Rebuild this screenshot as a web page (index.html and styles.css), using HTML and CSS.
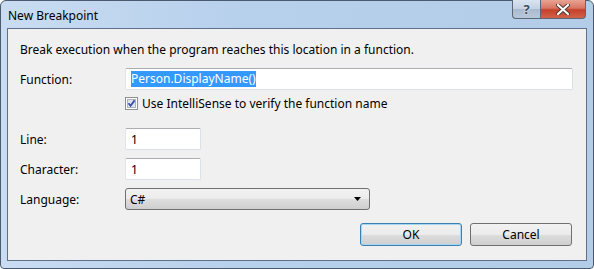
FILE: index.html
```html
<!DOCTYPE html>
<html lang="en">
<head>
    <meta charset="UTF-8">
    <title>New Breakpoint</title>
    <link rel="stylesheet" href="styles.css">
</head>
<body>
    <div class="window">
        <div class="titlebar">
            <span class="title">New Breakpoint</span>
            <div class="caption-buttons">
                <div class="cap help">?</div>
                <div class="cap close">
                    <svg width="14" height="11" viewBox="0 0 14 11">
                        <path d="M2 1 L12 10 M12 1 L2 10" stroke="#4a3530" stroke-width="4" stroke-linecap="round"/>
                        <path d="M2 1 L12 10 M12 1 L2 10" stroke="#fff" stroke-width="2.2" stroke-linecap="round"/>
                    </svg>
                </div>
            </div>
        </div>
        <div class="client">
            <div class="intro">Break execution when the program reaches this location in a function.</div>

            <div class="row row-function">
                <label class="label">Function:</label>
                <div class="textbox wide"><span class="selected">Person.DisplayName()</span></div>
            </div>

            <div class="row row-check">
                <span class="label"></span>
                <div class="check">
                    <svg class="checkbox" width="13" height="13" viewBox="0 0 13 13">
                        <rect x="0.5" y="0.5" width="12" height="12" fill="#fff" stroke="#8e8f8f"/>
                        <rect x="2.5" y="2.5" width="8" height="8" fill="#dfe5ef" stroke="#aeb3b9"/>
                        <path d="M3.5 6.2 L5.6 8.8 L9.6 3.4" fill="none" stroke="#3c4fa8" stroke-width="1.8"/>
                    </svg>
                    <span>Use IntelliSense to verify the function name</span>
                </div>
            </div>

            <div class="row row-line">
                <label class="label">Line:</label>
                <div class="textbox small">1</div>
            </div>

            <div class="row row-char">
                <label class="label">Character:</label>
                <div class="textbox small">1</div>
            </div>

            <div class="row row-lang">
                <label class="label">Language:</label>
                <div class="combo">
                    <span>C#</span>
                    <svg width="8" height="5" viewBox="0 0 8 5"><path d="M0 0 H7 L3.5 4 Z" fill="#000"/></svg>
                </div>
            </div>

            <div class="buttons">
                <div class="btn default">OK</div>
                <div class="btn">Cancel</div>
            </div>
        </div>
    </div>
</body>
</html>
```

FILE: styles.css
```css
body {
    margin: 0;
    padding: 0;
    font-family: "Noto Sans", "Open Sans", sans-serif;
    font-size: 12px;
    color: #000;
    background-color: #fff;
}

.window {
    width: 594px;
    height: 269px;
    box-sizing: border-box;
    border: 1px solid #4b5a6e;
    border-radius: 6px 6px 4px 4px;
    background: linear-gradient(to right, #c9dcf2 0%, #b7d0ec 40%, #b3cde9 100%);
    padding: 0 6px 7px 6px;
    display: flex;
    flex-direction: column;
}

.titlebar {
    height: 27px;
    display: flex;
    justify-content: space-between;
    align-items: flex-start;
}

.title {
    margin-top: 6px;
    margin-left: 1px;
    font-size: 12px;
    color: #000;
}

.caption-buttons {
    display: flex;
    margin-top: -1px;
    margin-right: 1px;
}

.cap {
    height: 19px;
    box-sizing: border-box;
    border: 1px solid #5c6776;
    border-top: none;
    display: flex;
    align-items: center;
    justify-content: center;
}

.help {
    width: 28px;
    border-right: none;
    border-radius: 0 0 0 4px;
    background: linear-gradient(to bottom, #d9e4f1 0%, #c3d1e2 50%, #a9bad0 51%, #b8c8dc 100%);
    color: #3e4a5c;
    font-weight: bold;
    font-size: 13px;
    text-shadow: 0 0 2px #fff;
}

.close {
    width: 46px;
    border-radius: 0 0 4px 0;
    background: linear-gradient(to bottom, #e8a493 0%, #d87562 45%, #c4412a 55%, #d3624a 100%);
}

.client {
    flex: 1;
    background-color: #f0f0f0;
    border: 1px solid #5f718a;
    padding: 13px 13px 0 12px;
}

.intro {
    line-height: 16px;
}

.row {
    display: flex;
    align-items: center;
}

.label {
    width: 105px;
    flex-shrink: 0;
}

.row-function {
    margin-top: 10px;
}

.row-check {
    margin-top: 6px;
    height: 14px;
}

.row-line {
    margin-top: 18px;
}

.row-char,
.row-lang {
    margin-top: 8px;
}

.textbox {
    height: 22px;
    box-sizing: border-box;
    background-color: #fff;
    border: 1px solid #dbdfe6;
    border-top-color: #abadb3;
    border-left-color: #e2e3ea;
    border-radius: 2px;
    padding: 0 5px;
    display: flex;
    align-items: center;
}

.wide {
    width: 448px;
}

.small {
    width: 76px;
}

.selected {
    background-color: #3399ff;
    color: #fff;
    line-height: 16px;
}

.check {
    display: flex;
    align-items: center;
    gap: 4px;
}

.checkbox {
    display: block;
}

.combo {
    width: 245px;
    height: 22px;
    box-sizing: border-box;
    border: 1px solid #707070;
    border-radius: 3px;
    background: linear-gradient(to bottom, #f2f2f2 0%, #ebebeb 50%, #dddddd 51%, #cfcfcf 100%);
    display: flex;
    align-items: center;
    justify-content: space-between;
    padding: 0 7px 0 4px;
}

.buttons {
    display: flex;
    justify-content: flex-end;
    gap: 8px;
    margin-top: 13px;
    margin-right: 1px;
}

.btn {
    width: 102px;
    height: 23px;
    box-sizing: border-box;
    border: 1px solid #707070;
    border-radius: 3px;
    background: linear-gradient(to bottom, #f2f2f2 0%, #ebebeb 50%, #dddddd 51%, #cfcfcf 100%);
    display: flex;
    align-items: center;
    justify-content: center;
}

.default {
    border-color: #3c7fb1;
    box-shadow: inset 0 0 0 1px #a6d7f2;
}
```
